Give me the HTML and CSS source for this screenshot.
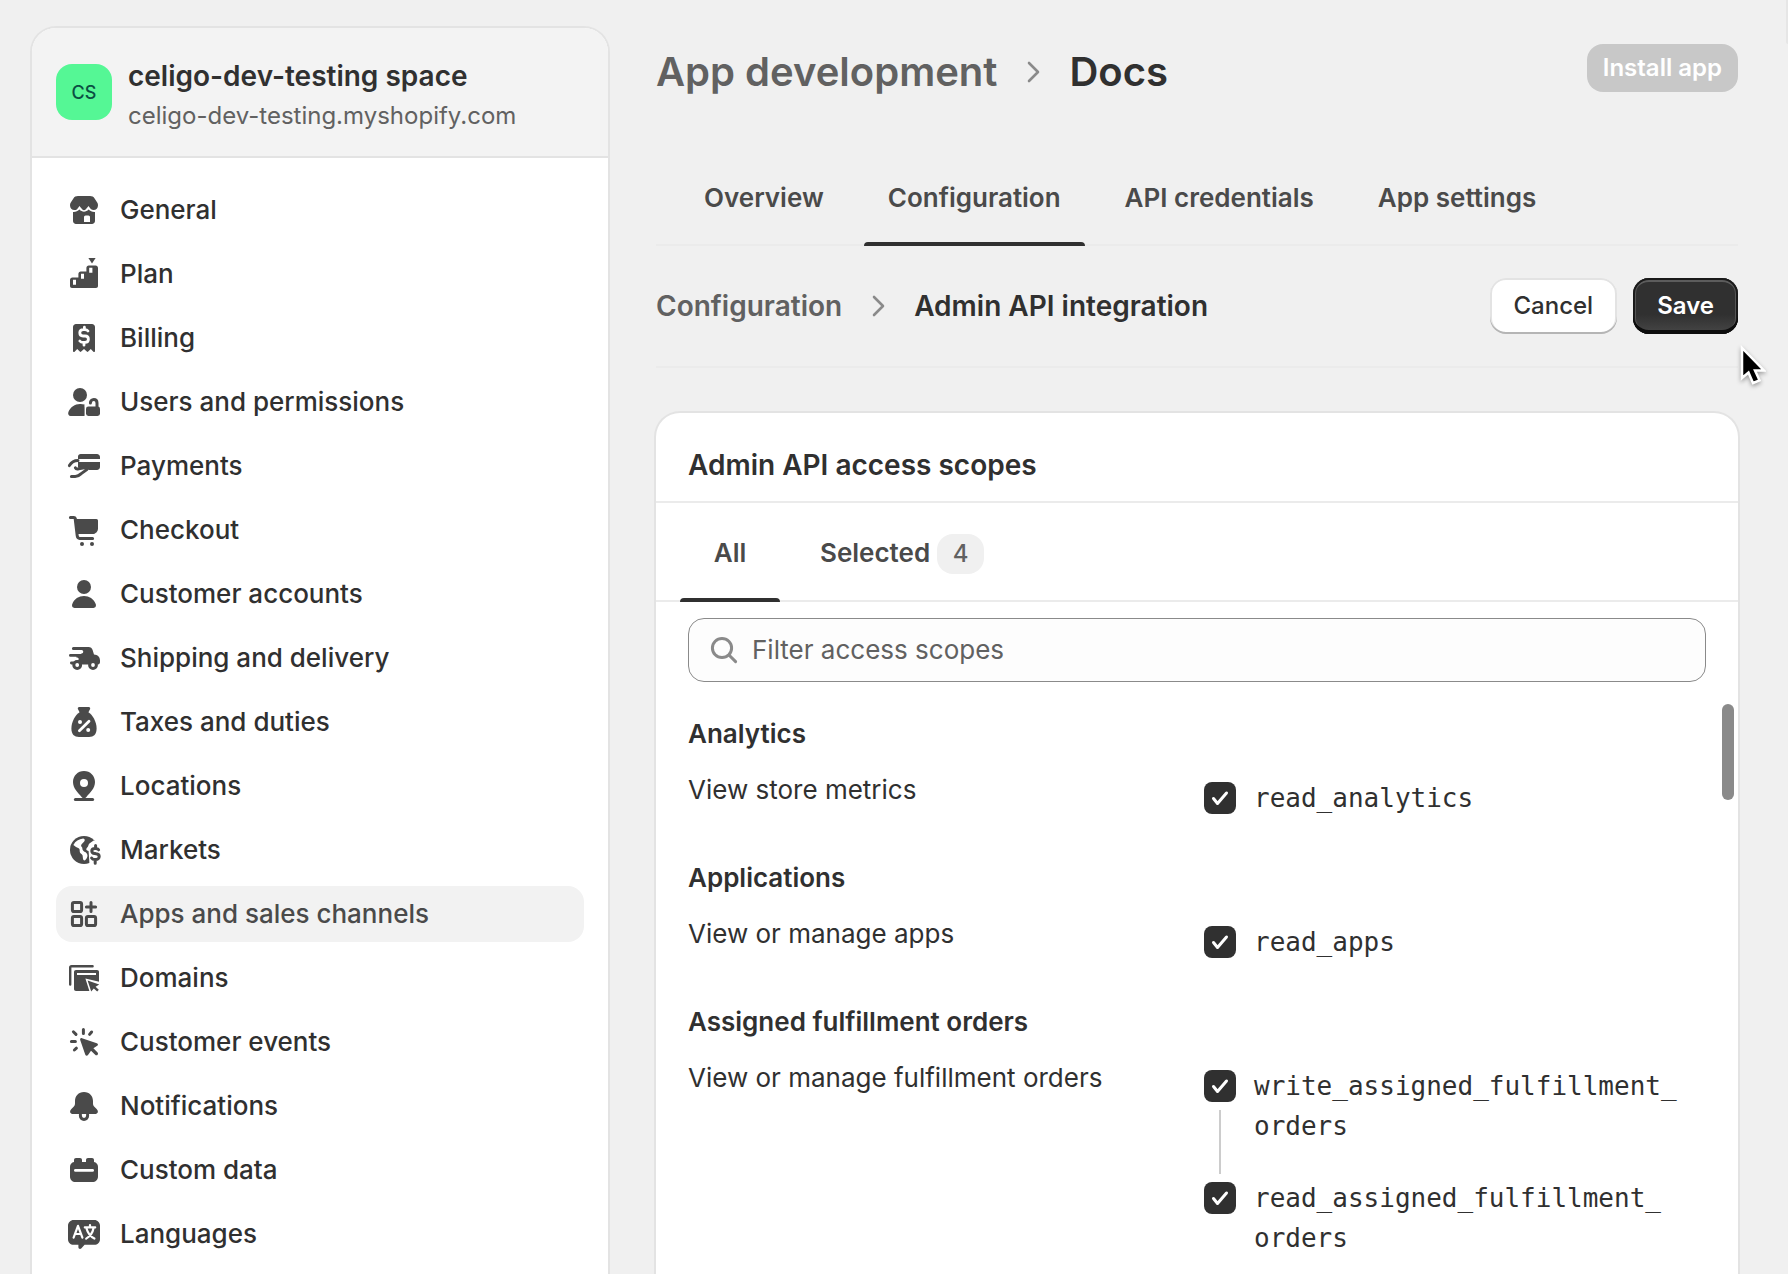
FILE: index.html
```html
<!DOCTYPE html>
<html lang="en">
<head>
<meta charset="utf-8">
<meta name="viewport" content="width=device-width, initial-scale=1">
<title>Docs – App development</title>
<link rel="stylesheet" href="styles.css">
</head>
<body>
<div class="layout">
  <aside class="sidebar">
    <header class="store">
      <span class="store-avatar" aria-hidden="true">CS</span>
      <div class="store-text">
        <p class="store-name">celigo-dev-testing space</p>
        <p class="store-domain">celigo-dev-testing.myshopify.com</p>
      </div>
    </header>
    <nav class="nav" aria-label="Settings">
      <a class="nav-item" href="#general">
        <svg class="icon" viewBox="0 0 20 20" aria-hidden="true"><path d="M7 3h6c1 0 1.800.4 2.300 1.200l1.300 2.100c.3.400.4.900.4 1.300 0 1.400-.9 2.400-2.200 2.400-1 0-1.600-.6-2.100-1.400L12.300 8 10.800 9.800c-.4.500-1.200.5-1.600 0L7.700 8l-.5.700C6.700 9.500 6.200 10 5.200 10 3.900 10 3 9 3 7.600c0-.5.1-.9.400-1.300l1.300-2.100C5.200 3.400 6 3 7 3Z"/><path d="M4.500 11c1.300.1 2.300-.3 3.200-1.200 1.300 1.400 3.300 1.400 4.600 0 .9.900 1.900 1.300 3.200 1.200v4.500c0 .8-.7 1.500-1.500 1.500H6c-.8 0-1.500-.7-1.500-1.500Z"/><path class="cut" d="M10 13.500c0-.4.300-.8.800-.8h1.400c.5 0 .8.400.8.800V16h-3Z"/></svg>
        <span>General</span>
      </a>
      <a class="nav-item" href="#plan">
        <svg class="icon" viewBox="0 0 20 20" aria-hidden="true"><path d="M12.200 2h3.600L14 4.800Z"/><path d="M3 13c0-.7.500-1.200 1.200-1.200h3V10c0-.7.500-1.200 1.200-1.200h2.800V7c0-.7.500-1.200 1.200-1.200h3.400c.7 0 1.200.5 1.200 1.200v9c0 .6-.4 1-1 1H4c-.6 0-1-.4-1-1Z"/><path class="cut" d="M4.500 12.900H6v2.500H4.500ZM8.500 9.900H10v2.500H8.500ZM12.600 6.900h1.600v2.500h-1.600Z"/></svg>
        <span>Plan</span>
      </a>
      <a class="nav-item" href="#billing">
        <svg class="icon" viewBox="0 0 20 20" aria-hidden="true"><path d="M6 3h8c.8 0 1.500.7 1.500 1.500v12c0 .5-.5.600-.8.400L13.400 15.500l-1.300 1.300c-.2.200-.5.200-.7 0L10 15.500l-1.400 1.300c-.2.200-.5.200-.7 0L6.600 15.500l-1.300 1.400c-.3.200-.8.100-.8-.4v-12C4.500 3.700 5.200 3 6 3Z"/><path class="cut-line" d="M12 6.500c-.3-.4-.9-.7-1.600-.7H9.600c-1 0-1.700.7-1.700 1.600S8.500 9 9.500 9h1.100c1 0 1.600.7 1.600 1.600s-.7 1.600-1.700 1.600H9.600c-.7 0-1.300-.2-1.700-.7M10.200 4.600v1.200M10 12.500v1.100"/></svg>
        <span>Billing</span>
      </a>
      <a class="nav-item" href="#users">
        <svg class="icon" viewBox="0 0 20 20" aria-hidden="true"><circle cx="8" cy="6.500" r="3.500"/><path d="M10.300 11.300A7 7 0 0 0 8 11c-2.600 0-4.800 1.500-5.800 4-.4 1 .2 2 1.100 2h6.900a1 1 0 0 0 .1-.5v-3.500c0-.7-.2-1 0-1.700Z"/><rect x="11" y="12.200" width="7" height="4.800" rx="1.200"/><path class="line" d="M13.200 10.500c0-1 .7-1.800 1.700-1.800s1.600.7 1.600 1.800v2"/></svg>
        <span>Users and permissions</span>
      </a>
      <a class="nav-item" href="#payments">
        <svg class="icon" viewBox="0 0 20 20" aria-hidden="true"><path d="M8.300 4h8.200c.8 0 1.500.7 1.500 1.500v1H7V5.300C7 4.600 7.600 4 8.300 4ZM7 8h11v2.500c0 .8-.7 1.500-1.500 1.500h-4.200c-.3-1-1-1.500-2-1.500l-3.300.3Z"/><path class="line" d="M2.700 9.800c1-1.700 2.300-2.500 4.300-2.500M5.700 10.900c.3.600.8.700 1.600.5l3.500-.6c1-.2 1.300.4.600 1l-2.800 2c-.9.900-1.800 1.400-3 1.400H3.700"/></svg>
        <span>Payments</span>
      </a>
      <a class="nav-item" href="#checkout">
        <svg class="icon" viewBox="0 0 20 20" aria-hidden="true"><path d="M5.200 4.500h11c.5 0 .8.400.8.800v3.900c0 1.500-1.200 2.800-2.800 2.800H6.300Z"/><path class="line" d="M3.200 3.700h1.600c.5 0 .8.300.8.700l1 8.400c.1.900.5 1.400 1.200 1.400h6.500"/><circle cx="9" cy="17" r="1"/><circle cx="14" cy="17" r="1"/></svg>
        <span>Checkout</span>
      </a>
      <a class="nav-item" href="#customers">
        <svg class="icon" viewBox="0 0 20 20" aria-hidden="true"><circle cx="10" cy="6.500" r="3.500"/><path d="M10 11c-2.600 0-4.900 1.500-5.800 3.900C3.700 16 4.300 17 5.300 17h9.400c1 0 1.600-1 1.100-2.100C14.900 12.500 12.600 11 10 11Z"/></svg>
        <span>Customer accounts</span>
      </a>
      <a class="nav-item" href="#shipping">
        <svg class="icon" viewBox="0 0 20 20" aria-hidden="true"><path d="M4.700 4.500h7.600c1 0 1.700.6 2 1.500l.7 2.200c1.800.2 3 1.200 3 3v.8c0 .7-.4 1.200-1 1.200H3.700a.7.700 0 0 1 0-1.400h2.500V9.400H3.200a.7.700 0 0 1 0-1.400h5.400V6H4.700a.7.700 0 0 1 0-1.500Z"/><path class="cut" d="M3 9.700h3.600a.7.700 0 0 1 0 1.500H3ZM4.500 6h4.300a.7.700 0 0 1 0 1.700H4.500Z"/><circle class="wheel" cx="6.600" cy="13.500" r="1.700"/><circle class="wheel" cx="14.500" cy="13.500" r="1.700"/></svg>
        <span>Shipping and delivery</span>
      </a>
      <a class="nav-item" href="#taxes">
        <svg class="icon" viewBox="0 0 20 20" aria-hidden="true"><path d="M7.600 2.500h4.800c.6 0 .9.600.6 1.100l-1 1.900H8l-1-1.900c-.3-.5 0-1.100.6-1.100Z"/><path d="M8 5h4c2.400 1.400 4.300 5 4.300 8.300 0 2.900-1.400 4.200-3.800 4.200h-5c-2.400 0-3.800-1.300-3.800-4.200C3.700 10 5.600 6.400 8 5Z"/><path class="cut-line" d="m7.700 14.400 4.800-4.800"/><circle class="cut" cx="8" cy="10" r="1"/><circle class="cut" cx="12.100" cy="14" r="1"/></svg>
        <span>Taxes and duties</span>
      </a>
      <a class="nav-item" href="#locations">
        <svg class="icon" viewBox="0 0 20 20" aria-hidden="true"><path d="M10 2.500c-3.100 0-5.500 2.400-5.500 5.500 0 3.300 2.500 5.300 4.300 7.500.6.800 1.800.8 2.400 0 1.800-2.200 4.300-4.200 4.300-7.500 0-3.100-2.400-5.500-5.500-5.500Z"/><circle class="cut" cx="10" cy="8.500" r="2"/><path class="line" d="M5.700 16.800h8.600"/></svg>
        <span>Locations</span>
      </a>
      <a class="nav-item" href="#markets">
        <svg class="icon" viewBox="0 0 20 20" aria-hidden="true"><circle cx="10" cy="10" r="7"/><path class="cut" d="M4.700 7.500c1-1.900 2.700-3 4.900-3.200.9.300 1 .8.500 1.400l-1.300 1.400c-.5.600-.2 1.200.3 1.700l.2 1.100c.2.900 1.500 1 2.100 1.800.7 1 .3 2-.6 3.200-.5.600-1.200.2-1.300-.5l-.2-1.600c-.2-.9-1.300-.9-1.400-1.800l-.1-1.200C7.600 9 6.700 8.800 6 8.500ZM14.800 5.200l-2.100 1.600c-.7.600-.3 1.300-1.100 2-.5.500-.7 1.300 0 1.500l.7.200.5 7.500h6V6.500Z"/><path class="line" d="M17.300 9.900c-.3-.5-.8-.7-1.400-.7h-.4c-1 0-1.600.5-1.600 1.300s.6 1.200 1.500 1.300l.7.100c.9.100 1.500.6 1.500 1.400s-.7 1.500-1.700 1.500h-.5c-.7 0-1.300-.3-1.600-.8M15.800 7.800v1.300M15.600 15.200v1.400"/></svg>
        <span>Markets</span>
      </a>
      <a class="nav-item is-active" href="#apps" aria-current="page">
        <svg class="icon" viewBox="0 0 20 20" aria-hidden="true"><g class="line"><rect x="4.200" y="4.200" width="4.600" height="4.600" rx=".8"/><rect x="4.200" y="11.200" width="4.600" height="4.600" rx=".8"/><rect x="11.200" y="11.200" width="4.600" height="4.600" rx=".8"/><path d="M13.500 4.200v4.600M11.200 6.500h4.600"/></g></svg>
        <span>Apps and sales channels</span>
      </a>
      <a class="nav-item" href="#domains">
        <svg class="icon" viewBox="0 0 20 20" aria-hidden="true"><path class="line thin" d="M3.100 13.300V4.800c0-.4.300-.7.700-.7h10.500"/><path d="M6 6h10.500c.6 0 1 .4 1 1v8.500c0 .6-.4 1-1 1H6c-.6 0-1-.4-1-1V7c0-.6.400-1 1-1Z"/><path class="cut" d="M6.500 7.500H16v1H6.500ZM10.700 10.300l8 1.800v6h-5.500Z"/><path d="m11.800 11.300 5.800 1.900-1.800 1.200 1.600 1.500-.8.900-1.700-1.600-1.300 1.600Z"/></svg>
        <span>Domains</span>
      </a>
      <a class="nav-item" href="#events">
        <svg class="icon" viewBox="0 0 20 20" aria-hidden="true"><path d="M9 8.100 16.400 10.600c.7.200.8 1 .2 1.300l-1.900 1.200 2.100 2.100c.7.800-.5 2-1.200 1.200l-2.100-2-1.500 2.100c-.4.600-1.100.5-1.400-.2L8.100 9C7.900 8.400 8.400 7.900 9 8.100Z"/><path class="line" d="M9.700 3.700v2M4.700 4.900l1.300 1.300M3.700 9.800h2M5.200 14l1-.9M12.800 6.200l1-1.200"/></svg>
        <span>Customer events</span>
      </a>
      <a class="nav-item" href="#notifications">
        <svg class="icon" viewBox="0 0 20 20" aria-hidden="true"><path d="M10 3C7.200 3 5.500 5 5.500 7.500v1.200c0 .7-.3 1.300-.8 1.800l-1 1C2.500 12.700 3.100 14 4.500 14h11c1.400 0 2-1.300.8-2.500l-1-1c-.5-.5-.8-1.100-.8-1.800V7.500C14.500 5 12.800 3 10 3Z"/><path class="line" d="M8.200 14.300v.6c0 1 .8 1.800 1.800 1.800s1.800-.8 1.800-1.800v-.6"/></svg>
        <span>Notifications</span>
      </a>
      <a class="nav-item" href="#data">
        <svg class="icon" viewBox="0 0 20 20" aria-hidden="true"><path d="M5 6V5c0-.6.400-1 1-1h2c.6 0 1 .4 1 1v1h2V5c0-.6.400-1 1-1h2c.6 0 1 .4 1 1v1c1.200.2 2 1.200 2 2.400V13.200c0 1.600-1.200 2.800-2.800 2.800H5.800C4.200 16 3 14.800 3 13.200V8.400C3 7.200 3.800 6.200 5 6Z"/><path class="cut-line" d="M5.700 10.200h8.600"/></svg>
        <span>Custom data</span>
      </a>
      <a class="nav-item" href="#languages">
        <svg class="icon" viewBox="0 0 20 20" aria-hidden="true"><path d="M4.800 3h10.400C16.700 3 18 4.300 18 5.800v6.800c0 1.600-1.300 2.800-2.800 2.800h-4.900L8.600 17.200c-.5.500-1.400.2-1.400-.6v-1.200H4.800C3.300 15.400 2 14.200 2 12.600V5.800C2 4.300 3.300 3 4.800 3Z"/><path class="cut-line fine" d="M4.800 11.800 7 5.900l2.200 5.900M5.600 10h2.800M10.400 6.700h5.200M13 5.500v1.200M14.800 6.900c-.4 2.300-1.600 4.200-3.700 5.400M11.300 7.400c.6 2.200 1.900 3.900 3.900 4.900"/></svg>
        <span>Languages</span>
      </a>
    </nav>
  </aside>

  <main class="main">
    <header class="page-header">
      <h1 class="page-title">
        <a class="muted-link" href="#development">App development</a>
        <svg class="icon chevron" viewBox="0 0 20 20" aria-hidden="true"><path d="m8 5.500 4.500 4.500L8 14.500"/></svg>
        <span>Docs</span>
      </h1>
      <button class="button button-disabled" type="button" disabled>Install app</button>
    </header>

    <nav class="tabs" aria-label="App">
      <a class="tab" href="#overview">Overview</a>
      <a class="tab is-selected" href="#configuration" aria-current="page">Configuration</a>
      <a class="tab" href="#credentials">API credentials</a>
      <a class="tab" href="#settings">App settings</a>
    </nav>

    <div class="subheader">
      <h2 class="crumbs">
        <a class="muted-link" href="#configuration">Configuration</a>
        <svg class="icon chevron" viewBox="0 0 20 20" aria-hidden="true"><path d="m8 5.500 4.500 4.500L8 14.500"/></svg>
        <span>Admin API integration</span>
      </h2>
      <div class="actions">
        <button class="button button-plain" type="button">Cancel</button>
        <button class="button button-primary" type="submit">Save</button>
        <svg class="pointer" viewBox="0 0 26 42" aria-hidden="true"><path d="M2 3v30l6.500-5.500L13 38l6.500-2.700L15 25.500h9Z"/></svg>
      </div>
    </div>

    <section class="card">
      <h2 class="card-title">Admin API access scopes</h2>
      <nav class="tabs card-tabs" aria-label="Scopes">
        <a class="tab is-selected" href="#all" aria-current="true">All</a>
        <a class="tab" href="#selected">Selected <span class="badge">4</span></a>
      </nav>
      <label class="search">
        <svg class="icon" viewBox="0 0 20 20" aria-hidden="true"><circle cx="9" cy="9" r="4.800"/><path d="m12.600 12.600 3.200 3.200"/></svg>
        <input type="search" placeholder="Filter access scopes" aria-label="Filter access scopes">
      </label>
      <div class="scopes">
        <section class="scope">
          <h3>Analytics</h3>
          <div class="scope-row">
            <p>View store metrics</p>
            <div class="options">
              <label class="option"><input type="checkbox" checked><span>read_analytics</span></label>
            </div>
          </div>
        </section>
        <section class="scope">
          <h3>Applications</h3>
          <div class="scope-row">
            <p>View or manage apps</p>
            <div class="options">
              <label class="option"><input type="checkbox" checked><span>read_apps</span></label>
            </div>
          </div>
        </section>
        <section class="scope">
          <h3>Assigned fulfillment orders</h3>
          <div class="scope-row">
            <p>View or manage fulfillment orders</p>
            <div class="options">
              <label class="option option-linked"><input type="checkbox" checked><span>write_assigned_fulfillment_<wbr>orders</span></label>
              <label class="option"><input type="checkbox" checked><span>read_assigned_fulfillment_<wbr>orders</span></label>
            </div>
          </div>
        </section>
        <span class="scroll-thumb"></span>
      </div>
    </section>
  </main>
</div>
<span class="edge-panel"></span>
</body>
</html>
```
FILE: styles.css
```css
* {
  box-sizing: border-box;
}

body,
h1,
h2,
h3,
p {
  margin: 0;
}

body {
  background: #f0f0f0;
  color: #303030;
  font: 400 26px/40px Inter, "Liberation Sans", sans-serif;
}

a {
  color: inherit;
  text-decoration: none;
}

.layout {
  display: grid;
  grid-template-columns: 576px minmax(0, 1fr);
  gap: 48px;
  min-height: 100vh;
  padding: 0 50px 0 32px;
}

.icon {
  flex: none;
  width: 40px;
  height: 40px;
  fill: #4a4a4a;
}

.icon .line,
.icon .wheel {
  stroke: #4a4a4a;
  stroke-width: 1.5;
  stroke-linecap: round;
  stroke-linejoin: round;
  fill: none;
}

.icon .thin {
  stroke-width: 1.2;
}

.icon .wheel,
.icon .cut {
  fill: #fff;
}

.icon .cut-line {
  fill: none;
  stroke: #fff;
  stroke-width: 1.4;
  stroke-linecap: round;
  stroke-linejoin: round;
}

.icon .fine {
  stroke-width: 1.1;
}

/* Sidebar */

.sidebar {
  margin-top: 28px;
  border-radius: 24px 24px 0 0;
  background: #fff;
  box-shadow: 0 0 0 2px #e3e3e3;
}

.store {
  display: flex;
  align-items: flex-start;
  gap: 16px;
  height: 130px;
  padding: 28px 24px 0;
  border-bottom: 2px solid #e3e3e3;
  border-radius: 24px 24px 0 0;
  background: #f3f3f3;
}

.store-avatar {
  display: grid;
  place-items: center;
  width: 56px;
  height: 56px;
  margin-top: 8px;
  padding-top: 2px;
  border-radius: 16px;
  background: #55f795;
  color: #0b4f43;
  font-size: 18px;
  font-weight: 500;
}

.store-name {
  font-size: 28px;
  font-weight: 600;
}

.store-domain {
  color: #616161;
  font-size: 24px;
}

.nav {
  display: flex;
  flex-direction: column;
  gap: 8px;
  padding: 24px 24px 12px;
}

.nav-item {
  display: flex;
  align-items: center;
  gap: 16px;
  height: 56px;
  padding: 0 8px;
  border-radius: 16px;
  font-weight: 550;
}

.nav-item.is-active {
  background: #f2f2f2;
  color: #4a4a4a;
}

/* Page header */

.main {
  display: flex;
  flex-direction: column;
}

.page-header {
  display: flex;
  justify-content: space-between;
  align-items: flex-start;
  padding-top: 44px;
}

.page-title,
.crumbs {
  display: flex;
  align-items: center;
  gap: 16px;
  font-weight: 600;
}

.page-title {
  padding-top: 4px;
  font-size: 40px;
  line-height: 48px;
}

.crumbs {
  font-size: 28px;
}

.muted-link {
  color: #616161;
}

.chevron {
  fill: none;
  stroke: #8a8a8a;
  stroke-width: 1.3;
  stroke-linecap: round;
  stroke-linejoin: round;
}

.button {
  height: 56px;
  padding: 0 24px;
  border: 0;
  border-radius: 16px;
  font: 550 24px/40px Inter, "Liberation Sans", sans-serif;
}

.button-disabled {
  height: 48px;
  padding: 0 16px;
  background: #c8c8c8;
  color: #fff;
  font-weight: 600;
}

.button-plain {
  background: #fff;
  color: #303030;
  box-shadow: inset 0 -2px 0 #b5b5b5, inset 0 0 0 2px #e3e3e3;
}

.button-primary {
  background: linear-gradient(#303030 65%, #474747);
  color: #fff;
  font-weight: 600;
  box-shadow: inset 0 -4px 0 #0d0d0d, inset 0 0 0 2px #1a1a1a, inset 0 4px 0 #5c5c5c, inset 0 0 0 3px #555;
}

/* Tabs */

.tabs {
  display: flex;
  gap: 16px;
  margin-top: 56px;
  padding: 0 24px;
  border-bottom: 2px solid #ebebeb;
}

.tab {
  position: relative;
  margin-bottom: -2px;
  padding: 26px 24px 28px;
  color: #4a4a4a;
  font-weight: 600;
  text-align: center;
}

.tab.is-selected::after {
  content: "";
  position: absolute;
  right: 0;
  bottom: 0;
  left: 0;
  height: 4px;
  border-radius: 4px 4px 0 0;
  background: #303030;
}

.subheader {
  display: flex;
  justify-content: space-between;
  align-items: center;
  padding: 32px 0;
  border-bottom: 2px solid #ebebeb;
}

.actions {
  position: relative;
  display: flex;
  gap: 16px;
}

.pointer {
  position: absolute;
  top: 67px;
  left: calc(100% + 2px);
  width: 26px;
  height: 42px;
  fill: #000;
  stroke: #fff;
  stroke-width: 2.5;
  filter: drop-shadow(0 2px 2px rgba(0, 0, 0, 0.35));
}

/* Scopes card */

.card {
  flex: 1;
  margin-top: 45px;
  border-radius: 24px 24px 0 0;
  background: #fff;
  box-shadow: 0 0 0 2px #e3e3e3;
}

.card-title {
  padding: 32px 32px 16px;
  border-bottom: 2px solid #ebebeb;
  font-size: 28px;
  font-weight: 600;
}

.card-tabs {
  margin-top: 0;
}

.card-tabs .tab {
  min-width: 100px;
  padding-top: 30px;
}

.badge {
  display: inline-block;
  padding: 0 16px;
  border-radius: 16px;
  background: #f0f0f0;
  color: #616161;
  font-size: 24px;
  font-weight: 550;
}

.search {
  display: flex;
  align-items: center;
  gap: 8px;
  height: 64px;
  margin: 16px 32px 0;
  padding: 0 15px;
  border: 1px solid #8a8a8a;
  border-radius: 16px;
  background: #fdfdfd;
}

.search .icon {
  fill: none;
  stroke: #8a8a8a;
  stroke-width: 1.5;
  stroke-linecap: round;
}

.search input {
  flex: 1;
  min-width: 0;
  padding: 0;
  border: 0;
  outline: 0;
  background: none;
  color: #303030;
  font: inherit;
}

.search input::placeholder {
  color: #616161;
}

.scopes {
  position: relative;
  display: flex;
  flex-direction: column;
  gap: 40px;
  padding: 32px 32px 16px;
}

.scope h3 {
  margin-bottom: 16px;
  font-size: 26px;
  font-weight: 600;
}

.scope-row {
  display: grid;
  grid-template-columns: 1fr 1fr;
  gap: 14px;
}

.options {
  display: flex;
  flex-direction: column;
  gap: 32px;
  padding-top: 8px;
}

.option {
  position: relative;
  display: flex;
  align-items: flex-start;
  gap: 18px;
  font-family: "DejaVu Sans Mono", monospace;
}

.option input {
  flex: none;
  width: 32px;
  height: 32px;
  margin: 4px 0;
  border-radius: 8px;
  appearance: none;
  background: #fff;
  box-shadow: inset 0 0 0 2px #8a8a8a;
}

.option input:checked {
  background: #303030 url("data:image/svg+xml,%3Csvg xmlns='http://www.w3.org/2000/svg' viewBox='0 0 32 32' fill='none' stroke='%23fff' stroke-width='3' stroke-linecap='round' stroke-linejoin='round'%3E%3Cpath d='m9.500 16.500 4 5L22.500 11'/%3E%3C/svg%3E");
  box-shadow: none;
}

/* Joins a write scope to the read scope that it implies */
.option-linked::after {
  content: "";
  position: absolute;
  top: 44px;
  bottom: -28px;
  left: 15px;
  width: 2px;
  background: #ccc;
}

.scroll-thumb {
  position: absolute;
  top: 22px;
  right: 4px;
  width: 12px;
  height: 96px;
  border-radius: 6px;
  background: #8a8a8a;
}

.edge-panel {
  position: fixed;
  top: 0;
  right: 0;
  width: 2px;
  height: 44px;
  border-radius: 0 0 0 2px;
  background: #e6e6e6;
}
```
